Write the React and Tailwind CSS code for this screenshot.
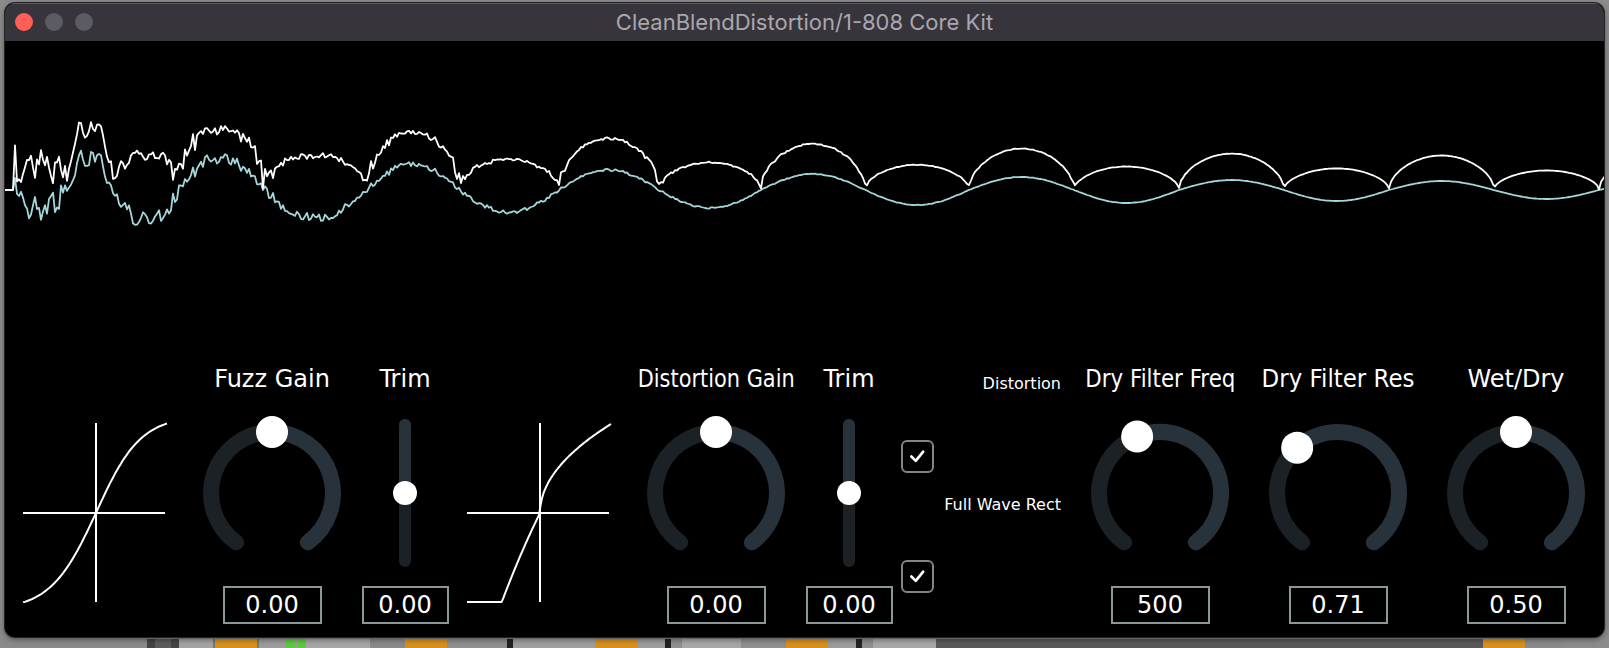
import React from "react";

// waveform: zero crossings (page x) and signed half-cycle amplitudes
const CROSS = [15, 65, 115, 180, 264, 367, 459, 559, 659, 761, 865, 969, 1074, 1179, 1284, 1389, 1494, 1599, 1704];
const AMPS = [-18, 36, -32, 33, -28, 26, -22, 20, -18, 16, -15, 13, -13, 10, -11, 9, -9, 8];

function buildWave() {
  let seed = 987654;
  const rand = () => {
    seed = (seed * 1103515245 + 12345) % 2147483648;
    return (seed / 2147483648) * 2 - 1;
  };
  const base = 149;
  const cyan = [];
  const white = [];
  for (let px = 5; px <= 1605; px += 2) {
    let s = 0;
    let n = 0;
    if (px >= 15) {
      let i = 0;
      while (i < CROSS.length - 2 && px >= CROSS[i + 1]) i++;
      const t = (px - CROSS[i]) / (CROSS[i + 1] - CROSS[i]);
      s = AMPS[i] * Math.sin(Math.PI * t);
      n = Math.exp(-(px - 15) / 230);
      s += 16 * n * rand();
    }
    const v = s > 0 ? 11.5 * Math.sqrt(s) : 6.5 * Math.sqrt(-s);
    let w = v < 45 ? v : 45 + 25 * Math.tanh((v - 45) / 25);
    w += 6 * n * rand();
    const x = px - 5;
    cyan.push(`${x},${(base - s).toFixed(1)}`);
    white.push(`${x},${(base - Math.max(0, w)).toFixed(1)}`);
  }
  return { cyan: cyan.join(" "), white: white.join(" ") };
}

const WAVE = buildWave();

function Waveform() {
  return (
    <svg width="1599" height="319" className="block">
      <polyline points={WAVE.cyan} fill="none" stroke="#a3d7dc" strokeWidth="1.8" strokeLinejoin="round" />
      <polyline points={WAVE.white} fill="none" stroke="#ffffff" strokeWidth="1.8" strokeLinejoin="round" />
    </svg>
  );
}

// transfer curves, svg origin = page (ox, 422)
function softCurve() {
  const pts = [];
  for (let i = 0; i <= 80; i++) {
    const u = -1 + (2 * i) / 80;
    const x = 96 + (u < 0 ? 73 * u : 71 * u) - 22;
    const y = 513 - (89.5 * Math.tanh(1.6 * u)) / Math.tanh(1.6) - 422;
    pts.push(`${x.toFixed(1)},${y.toFixed(1)}`);
  }
  return pts.join(" ");
}

function hardCurve() {
  const pts = [];
  for (let px = 467; px <= 611; px += 1.5) {
    let v;
    if (px >= 540) {
      v = Math.sqrt((px - 540) / 71);
    } else {
      const u = (540 - px) / 73;
      v = -Math.min(1, 1.65 * u + 0.5 * u * u);
    }
    pts.push(`${(px - 466).toFixed(1)},${(513 - 89 * v - 422).toFixed(1)}`);
  }
  return pts.join(" ");
}

function Transfer({ hard }) {
  return (
    <svg width="146" height="181" className="block">
      <line x1="1" y1="91" x2="143" y2="91" stroke="#fff" strokeWidth="2" />
      <line x1="74" y1="1" x2="74" y2="180" stroke="#fff" strokeWidth="2" />
      <polyline points={hard ? hardCurve() : softCurve()} fill="none" stroke="#fff" strokeWidth="2" strokeLinejoin="round" />
    </svg>
  );
}

function Knob({ angle }) {
  const c = 70;
  const r = 61;
  const pt = (a) => [c + r * Math.sin((a * Math.PI) / 180), c - r * Math.cos((a * Math.PI) / 180)];
  const arc = (a0, a1) => {
    const [x0, y0] = pt(a0);
    const [x1, y1] = pt(a1);
    const large = a1 - a0 > 180 ? 1 : 0;
    return `M${x0} ${y0} A${r} ${r} 0 ${large} 1 ${x1} ${y1}`;
  };
  const [tx, ty] = pt(angle);
  return (
    <svg width="140" height="140" className="block overflow-visible">
      <path d={arc(angle, 144)} stroke="#28323a" strokeWidth="16" strokeLinecap="round" fill="none" />
      <path d={arc(-144, angle)} stroke="#1b2124" strokeWidth="16" strokeLinecap="round" fill="none" />
      <circle cx={tx} cy={ty} r="16" fill="#fff" />
    </svg>
  );
}

function Fader() {
  return (
    <svg width="24" height="150" className="block">
      <rect x="6" y="1" width="12" height="148" rx="6" fill="#1b2124" />
      <path d="M6 75 V7 a6 6 0 0 1 12 0 V75 Z" fill="#28323a" />
      <circle cx="12" cy="75" r="12" fill="#fff" />
    </svg>
  );
}

function ValueBox({ value, w }) {
  return (
    <div className={`flex h-[38px] items-center justify-center border-2 border-[#8c9799] text-[24px] text-white ${w}`}>
      {value}
    </div>
  );
}

function Label({ children, scale }) {
  return (
    <div className={`mt-[2px] h-[34px] whitespace-nowrap text-[24px] leading-[34px] text-white ${scale}`}>
      {children}
    </div>
  );
}

function KnobColumn({ label, scale, angle, value, className }) {
  return (
    <div className={`flex w-[140px] shrink-0 flex-col items-center ${className}`}>
      <Label scale={scale}>{label}</Label>
      <div className="mt-[27px]">
        <Knob angle={angle} />
      </div>
      <div className="mt-[23px]">
        <ValueBox value={value} w="w-[99px]" />
      </div>
    </div>
  );
}

function TrimColumn({ className }) {
  return (
    <div className={`flex w-[88px] shrink-0 flex-col items-center ${className}`}>
      <Label>Trim</Label>
      <div className="mt-[22px]">
        <Fader />
      </div>
      <div className="mt-[18px]">
        <ValueBox value="0.00" w="w-[87px]" />
      </div>
    </div>
  );
}

function Check({ className }) {
  return (
    <div className={`flex h-[33px] w-[33px] items-center justify-center rounded-[6px] border-2 border-[#858585] ${className}`}>
      <svg width="29" height="29" viewBox="0 0 33 33" className="block">
        <path d="M9.5 16.5 L14.5 21.5 L23 11" fill="none" stroke="#fff" strokeWidth="3" strokeLinecap="round" strokeLinejoin="round" />
      </svg>
    </div>
  );
}

function Controls() {
  return (
    <div className="flex h-[277px] items-start pl-[17px] font-['DejaVu_Sans',sans-serif]">
      <div className="mt-[62px] shrink-0">
        <Transfer />
      </div>
      <KnobColumn label="Fuzz Gain" angle={0} value="0.00" className="ml-[34px]" />
      <TrimColumn className="ml-[19px]" />
      <div className="ml-[17px] mt-[62px] shrink-0">
        <Transfer hard />
      </div>
      <KnobColumn label="Distortion Gain" scale="scale-x-[0.87]" angle={0} value="0.00" className="ml-[34px]" />
      <TrimColumn className="ml-[19px]" />
      <div className="ml-[8px] flex shrink-0 flex-col">
        <Check className="mt-[80px]" />
        <Check className="mt-[87px]" />
      </div>
      <div className="ml-[7px] flex w-[120px] shrink-0 flex-col items-end text-[16px] leading-[20px] text-white">
        <div className="mt-[14px] whitespace-nowrap">Distortion</div>
        <div className="mt-[101px] whitespace-nowrap">Full Wave Rect</div>
      </div>
      <KnobColumn label="Dry Filter Freq" scale="scale-x-[0.89]" angle={-22} value="500" className="ml-[29px]" />
      <KnobColumn label="Dry Filter Res" scale="scale-x-[0.955]" angle={-42} value="0.71" className="ml-[38px]" />
      <KnobColumn label="Wet/Dry" angle={0} value="0.50" className="ml-[38px]" />
    </div>
  );
}

function BottomStrip() {
  const blocks = [
    ["w-[147px]", "bg-[#8a8a8a]"],
    ["w-[8px]", "bg-[#444]"],
    ["w-[16px]", "bg-[#5c5c5c]"],
    ["w-[8px]", "bg-[#444]"],
    ["w-[34px]", "bg-[#a3a3a3]"],
    ["w-[2px]", "bg-[#777]"],
    ["w-[42px]", "bg-[#d8911d]"],
    ["w-[2px]", "bg-[#777]"],
    ["w-[26px]", "bg-[#9c9c9c]"],
    ["w-[10px]", "bg-[#5dc93f]"],
    ["w-[2px]", "bg-[#9c9c9c]"],
    ["w-[9px]", "bg-[#5dc93f]"],
    ["w-[64px]", "bg-[#a6a6a6]"],
    ["w-[35px]", "bg-[#8a8a8a]"],
    ["w-[42px]", "bg-[#d8911d]"],
    ["w-[60px]", "bg-[#8f8f8f]"],
    ["w-[6px]", "bg-[#222]"],
    ["w-[82px]", "bg-[#a0a0a0]"],
    ["w-[42px]", "bg-[#d8911d]"],
    ["w-[28px]", "bg-[#9c9c9c]"],
    ["w-[6px]", "bg-[#222]"],
    ["w-[11px]", "bg-[#8f8f8f]"],
    ["w-[59px]", "bg-[#a8a8a8]"],
    ["w-[45px]", "bg-[#8f8f8f]"],
    ["w-[42px]", "bg-[#d8911d]"],
    ["w-[28px]", "bg-[#9c9c9c]"],
    ["w-[6px]", "bg-[#222]"],
    ["w-[11px]", "bg-[#8f8f8f]"],
    ["w-[63px]", "bg-[#a8a8a8]"],
    ["w-[547px]", "bg-[#5a5a5a]"],
    ["w-[42px]", "bg-[#d8911d]"],
    ["w-[40px]", "bg-[#8a8a8a]"],
  ];
  return (
    <div className="flex h-[9px] shrink-0">
      {blocks.map(([w, bg], i) => (
        <div key={i} className={`h-full shrink-0 ${w} ${bg}`} />
      ))}
    </div>
  );
}

export default function App() {
  return (
    <div className="relative h-[648px] w-[1609px] overflow-hidden bg-[#8c8c8c]">
      {/* desktop behind the plugin window */}
      <div className="flex h-full flex-col justify-end">
        <BottomStrip />
      </div>

      {/* plugin window */}
      <div className="absolute left-[5px] top-[3px] flex h-[634px] w-[1599px] flex-col overflow-hidden rounded-[10px] bg-black shadow-[0_0_0_1px_#232325,0_2px_6px_rgba(0,0,0,0.5)]">
        <div className="grid h-[38px] shrink-0 grid-cols-[1fr_auto_1fr] items-center bg-[#37343b] shadow-[inset_0_1px_0_#5e5c63]">
          <div className="flex items-center gap-[12px] pl-[10px]">
            <span className="h-[18px] w-[18px] rounded-full bg-[#fe5f57]" />
            <span className="h-[18px] w-[18px] rounded-full bg-[#5c5a63]" />
            <span className="h-[18px] w-[18px] rounded-full bg-[#5c5a63]" />
          </div>
          <div className="font-['Inter',sans-serif] text-[22px] text-[#a9a7ad]">
            CleanBlendDistortion/1-808 Core Kit
          </div>
          <div />
        </div>
        <Waveform />
        <Controls />
      </div>
    </div>
  );
}
